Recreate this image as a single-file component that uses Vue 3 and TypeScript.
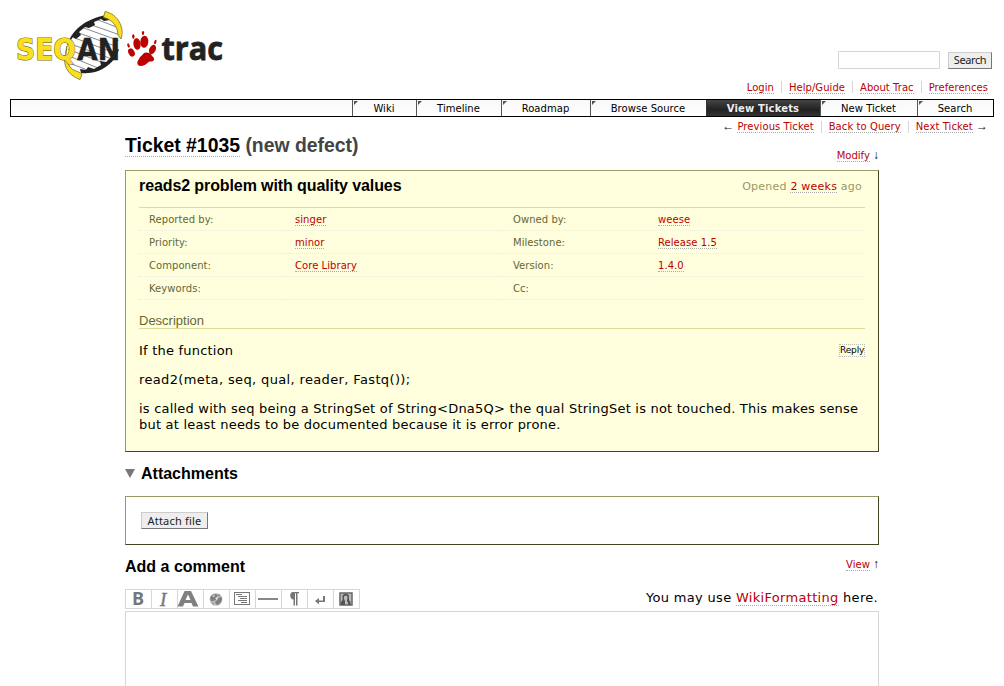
<script setup lang="ts">
interface Tab { label: string; width: number; active?: boolean }
interface Field { label: string; value?: string }

const tabs: Tab[] = [
  { label: 'Wiki', width: 64 },
  { label: 'Timeline', width: 85 },
  { label: 'Roadmap', width: 89 },
  { label: 'Browse Source', width: 116 },
  { label: 'View Tickets', width: 114, active: true },
  { label: 'New Ticket', width: 97 },
  { label: 'Search', width: 76 },
]
const fields: Field[] = [
  { label: 'Reported by:', value: 'singer' },
  { label: 'Owned by:', value: 'weese' },
  { label: 'Priority:', value: 'minor' },
  { label: 'Milestone:', value: 'Release 1.5' },
  { label: 'Component:', value: 'Core Library' },
  { label: 'Version:', value: '1.4.0' },
  { label: 'Keywords:' },
  { label: 'Cc:' },
]
const metaLinks: string[] = ['Login', 'Help/Guide', 'About Trac', 'Preferences']
const tools: string[] = ['bold', 'italic', 'heading', 'link', 'code', 'rule', 'para', 'break', 'image']
</script>

<template>
  <div class="page">
    <header class="banner">
      <svg class="logo" width="230" height="88" viewBox="0 0 230 88">
        <defs>
          <clipPath id="helix">
            <path d="M105 16C118 23 121 37 117 48C108 65 94 73 81 72C69 68 65 60 68 47C74 31 87 20 105 16Z" />
          </clipPath>
        </defs>
        <g clip-path="url(#helix)" stroke="#555" stroke-width=".7">
          <path d="M93 18L119 28M86 23L120 35M81 27L120 41M76 32L118 47M72 37L115 53M68 43L112 59M65 48L106 64M64 54L98 68M64 61L90 71" />
        </g>
        <path d="M67 46C71 31 84 19 107 15L110 20L104 21L101 19L94 22L95 25L89 28L85 27L79 32L81 35L76 39L73 37C70 41 69 44 67 46Z" fill="#222" />
        <path d="M80 69L86 70L88 67L94 69L101 65L100 61L106 62L112 56L110 52L119 49C115 64 99 75 81 73Z" fill="#222" />
        <path d="M105 11.500C118 14 125 28 121 39L118 35C118 27 112 19 103.500 17.500Z" fill="#f9df20" stroke="#77721c" stroke-width=".8" />
        <path d="M67 46C64.500 54 66 61 70 67C73 71 78 71 82 74L80 79.500C67 75 62 64 66 53Z" fill="#f9df20" stroke="#77721c" stroke-width=".8" />
        <text x="16" y="60" textLength="60" lengthAdjust="spacingAndGlyphs" class="logo-seq">SEQ</text>
        <text x="77" y="60" textLength="43" lengthAdjust="spacingAndGlyphs" class="logo-an">AN</text>
        <g fill="#bd0000">
          <path d="M139 59C140 56 143 55 144 53C147 51.500 151 53 152 56C156 59 154 62 150 61.500C147 62 146 66 141 66C136 66 137 61 139 59Z" />
          <ellipse cx="137" cy="44" rx="3.6" ry="5.800" transform="rotate(-8 137 44)" />
          <ellipse cx="144.300" cy="41.800" rx="4" ry="6" transform="rotate(5 144.300 41.800)" />
          <ellipse cx="131.500" cy="52.500" rx="3" ry="4.300" transform="rotate(-28 131.500 52.500)" />
          <ellipse cx="152.500" cy="49.500" rx="3.200" ry="4.900" transform="rotate(24 152.500 49.500)" />
          <ellipse cx="133.300" cy="36.500" rx="1.200" ry="2.200" />
          <ellipse cx="143" cy="33" rx="1.200" ry="2" />
          <ellipse cx="155.300" cy="42" rx="1.100" ry="2.200" transform="rotate(15 155.300 42)" />
          <ellipse cx="128.500" cy="45.500" rx="1.100" ry="2.200" transform="rotate(-20 128.500 45.500)" />
        </g>
        <text x="161.500" y="60" textLength="61.500" lengthAdjust="spacingAndGlyphs" class="logo-trac">trac</text>
      </svg>
      <div class="banner-right">
        <form class="search" @submit.prevent>
          <input type="text" aria-label="Search text" />
          <button class="btn" type="submit">Search</button>
        </form>
        <nav class="meta"><span v-for="m in metaLinks" :key="m"><a>{{ m }}</a></span></nav>
      </div>
    </header>

    <nav class="mainnav">
      <a v-for="t in tabs" :key="t.label" :class="{ active: t.active }" :style="{ width: t.width + 'px' }">{{ t.label }}</a>
    </nav>
    <nav class="ctxt">
      <span><i class="arrow">←</i> <a>Previous Ticket</a></span><span><a>Back to Query</a></span><span><a>Next Ticket</a> <i class="arrow">→</i></span>
    </nav>

    <main>
      <div class="title-row">
        <h1><a>Ticket #1035</a> <span>(new defect)</span></h1>
        <div class="jump"><a>Modify</a> <i>↓</i></div>
      </div>
      <section class="ticket">
        <div class="ticket-head">
          <h2>reads2 problem with quality values</h2>
          <p class="date">Opened <a>2 weeks</a> ago</p>
        </div>
        <dl class="props">
          <template v-for="f in fields" :key="f.label">
            <dt>{{ f.label }}</dt>
            <dd><a v-if="f.value">{{ f.value }}</a></dd>
          </template>
        </dl>
        <h3>Description</h3>
        <div class="desc">
          <button class="reply">Reply</button>
          <p>If the function</p>
          <p class="call">read2(meta, seq, qual, reader, Fastq());</p>
          <p>is called with seq being a StringSet of String&lt;Dna5Q&gt; the qual StringSet is not touched. This makes sense<br />but at least needs to be documented because it is error prone.</p>
        </div>
      </section>

      <h2 class="attach-title">
        <svg width="10" height="9" viewBox="0 0 10 9"><path d="M0 0H10L5 9Z" fill="#777" /></svg>Attachments
      </h2>
      <section class="attach"><button class="btn">Attach file</button></section>

      <div class="comment-head">
        <h2>Add a comment</h2>
        <div class="jump"><a>View</a> <i>↑</i></div>
      </div>
      <div class="tool-row">
        <div class="toolbar">
          <span v-for="k in tools" :key="k">
            <svg width="25" height="19" viewBox="0 0 25 19">
              <text v-if="k === 'bold'" x="6" y="16" class="g-bold">B</text>
              <text v-else-if="k === 'italic'" x="8" y="16.500" class="g-italic">I</text>
              <path v-else-if="k === 'heading'" d="M-.5 17.500L6.500 2H13L20.500 17.500H15L13.500 14H6.500L5 17.500ZM7.500 11H12.500L10 5.500Z" fill="#808080" fill-rule="evenodd" />
              <g v-else-if="k === 'link'">
                <circle cx="12" cy="10.500" r="6.300" fill="#bbb" />
                <path d="M6 9C7 6 9 5 12 5L14 7L11 9L12 11L9 12L7 12ZM14 9L18 8C18.500 12 16 15.500 13 16L11 13.500Z" fill="#808080" />
                <path d="M8 7L11 6L10 8ZM12 9L14 8L13 12Z" fill="#eee" />
                <path d="M13 4.500L17 6L15 8ZM7 13L10 14L10 16Z" fill="#999" />
              </g>
              <g v-else-if="k === 'code'" fill="none" stroke="#777">
                <rect x="4.500" y="3.500" width="15" height="12" />
                <path d="M6 5.500H12M8 7.500H17M10 9.500H17M8 11.500H17M11 13.500H17" />
              </g>
              <path v-else-if="k === 'rule'" d="M2 9H22V11H2Z" fill="#888" />
              <path v-else-if="k === 'para'" d="M17 3V4.200H15.500V16.500H14V4.200H13V16.500H11.500V10.500C7.500 10.500 7 3 11 3Z" fill="#777" />
              <path v-else-if="k === 'break'" d="M15 7H17V13H11V15.500L7 12L11 9V11.500H15Z" fill="#777" />
              <g v-else>
                <rect x="6" y="4" width="12" height="12" fill="#bbb" stroke="#666" stroke-width="1.500" />
                <path d="M7 16V13L8.500 11V6.500C10 4 13.500 4 15 6.500V11L16.500 13V16H14V13H13V11L13.500 9V7.500L12 6.500L10 7.500V10L11 12V16Z" fill="#555" />
              </g>
            </svg>
          </span>
        </div>
        <p class="hint">You may use <a>WikiFormatting</a> here.</p>
      </div>
      <div class="textarea"></div>
    </main>
  </div>
</template>

<style>
html, body { margin: 0; background: #fff; overflow: hidden; }
</style>

<style scoped>
.page { width: 1004px; height: 686px; overflow: hidden; background: #fff; color: #000; font: 13px/16px Verdana, "DejaVu Sans", sans-serif; }
* { box-sizing: border-box; }
h1, h2, h3, p, dl, dt, dd { margin: 0; }
i { font-style: normal; }
a { color: #b00; border-bottom: 1px dotted #aaa; }
h1, h2, h3 { font-family: "Liberation Sans", Arial, sans-serif; }
.banner { height: 99px; display: flex; justify-content: space-between; }
.logo { display: block; }
.logo-seq { font: bold 30px "DejaVu Sans", sans-serif; fill: #f9df20; stroke: #77721c; stroke-width: 1.2px; paint-order: stroke; }
.logo-an { font: bold 30px "DejaVu Sans", sans-serif; fill: #222; stroke: #222; stroke-width: .5px; }
.logo-trac { font: bold 33px "Open Sans", sans-serif; fill: #222; stroke: #222; stroke-width: .8px; }
.banner-right { padding-top: 51px; }
.search { display: flex; justify-content: flex-end; align-items: center; gap: 8px; height: 18px; padding-right: 12px; }
.search input { width: 102px; height: 18px; border: 1px solid #d7d7d7; padding: 0; outline: 0; }
.btn { height: 17px; border: 1px solid; border-color: #ccc #777 #777 #ccc; background: #eee; color: #222; padding: 0; font: 11px/14px "Noto Sans", sans-serif; letter-spacing: .2px; white-space: nowrap; text-align: center; }
.search .btn { width: 44px; letter-spacing: -.4px; }
.meta, .ctxt { display: flex; justify-content: flex-end; font-size: 10px; line-height: 11px; white-space: pre; letter-spacing: .08px; }
.meta { padding: 12px 9px 0 0; letter-spacing: .05px; }
.meta span, .ctxt span { padding: 0 7px; height: 12px; border-left: 1px solid #d7d7d7; }
.meta span { line-height: 13px; }
.meta span:first-child, .ctxt span:first-child { border-left: 0; }
.arrow { display: inline-block; width: 12px; height: 11px; text-align: center; font-family: "Liberation Sans", sans-serif; font-size: 12px; letter-spacing: 0; color: #111; }
.mainnav { display: flex; justify-content: flex-end; margin: 0 10px; width: 984px; height: 18px; border: 1px solid #000; background: linear-gradient(#f8f8f8, #fff); font-size: 10px; line-height: 17px; letter-spacing: .05px; }
.mainnav a { position: relative; flex: none; text-align: center; color: #000; border: 0; border-left: 1px solid #555; padding-right: 1px; }
.mainnav a::before { content: ""; position: absolute; left: 1px; top: 1px; border-top: 4px solid #555; border-right: 4px solid transparent; }
.mainnav a.active { background: linear-gradient(#444, #222 60%, #333); color: #eee; font-weight: bold; border-color: #333; padding-right: 1px; letter-spacing: .15px; }
.mainnav a.active::before { display: none; }
.ctxt { height: 18px; padding: 4px 9px 0 0; }
main { width: 754px; margin: 0 0 0 125px; }
.title-row { height: 35px; display: flex; justify-content: space-between; }
h1 { font-size: 19.400px; line-height: 20px; }
h1 a { color: #000; }
h1 span { color: #444; }
.jump { font-size: 10px; line-height: 11px; white-space: pre; }
.jump i { font-family: "Liberation Sans", sans-serif; font-size: 12px; }
.title-row .jump { padding-top: 15px; }
.ticket { height: 282px; padding: 0 13px; border: 1px solid; border-color: #996 #442 #442 #996; background: #ffd; }
.ticket-head { height: 36px; display: flex; justify-content: space-between; }
h2 { font-size: 16px; line-height: 18px; }
.ticket-head h2 { padding-top: 6px; letter-spacing: -.1px; }
.date { padding: 9px 3px 0 0; font-size: 11px; line-height: 13px; color: #996; letter-spacing: .23px; }
.date a { display: inline-block; height: 13px; }
.props { display: grid; grid-template-columns: 146px 218px 145px 217px; grid-auto-rows: 23px; height: 93px; border-top: 1px solid #dd9; color: #663; font-size: 10px; line-height: 11px; letter-spacing: .06px; }
.props dt, .props dd { padding: 6px 10px 0; border-bottom: 1px dotted #eed; }
h3 { height: 29px; padding-top: 13px; border-bottom: 1px solid #dd9; color: #663; font-size: 13px; font-weight: normal; line-height: 16px; }
.desc { padding-top: 14px; white-space: nowrap; letter-spacing: .21px; }
.desc p { margin-bottom: 13px; }
.desc .call { letter-spacing: .36px; }
.reply { float: right; width: 26px; height: 13px; margin-top: 1px; padding: 0; border: 1px dotted #bbb; background: transparent; font: 9px/11px "DejaVu Sans", sans-serif; letter-spacing: -.15px; }
.attach-title { height: 44px; padding-top: 13px; display: flex; }
.attach-title svg { margin: 4px 6px 0 0; }
.attach { height: 49px; padding: 15px; border: 1px solid; border-color: #996 #442 #442 #996; }
.attach .btn { display: block; width: 67px; }
.comment-head { height: 44px; display: flex; justify-content: space-between; padding-top: 13px; }
.comment-head .jump { padding-top: 1px; }
.tool-row { height: 22px; display: flex; justify-content: space-between; }
.toolbar { display: flex; width: 235px; height: 20px; border: 1px solid #d7d7d7; }
.toolbar span { width: 26px; height: 18px; border-right: 1px solid #d7d7d7; }
.toolbar span:last-child { border: 0; }
.toolbar svg { display: block; margin-top: -1px; overflow: visible; }
.g-bold { font: bold 18px "Open Sans", sans-serif; fill: #777; }
.g-italic { font: italic 19px "Liberation Serif", serif; fill: #777; stroke: #777; stroke-width: .4px; }
.hint { padding: 1px 1px 0 0; white-space: nowrap; letter-spacing: .31px; }
.textarea { height: 90px; border: 1px solid #d7d7d7; }
</style>
